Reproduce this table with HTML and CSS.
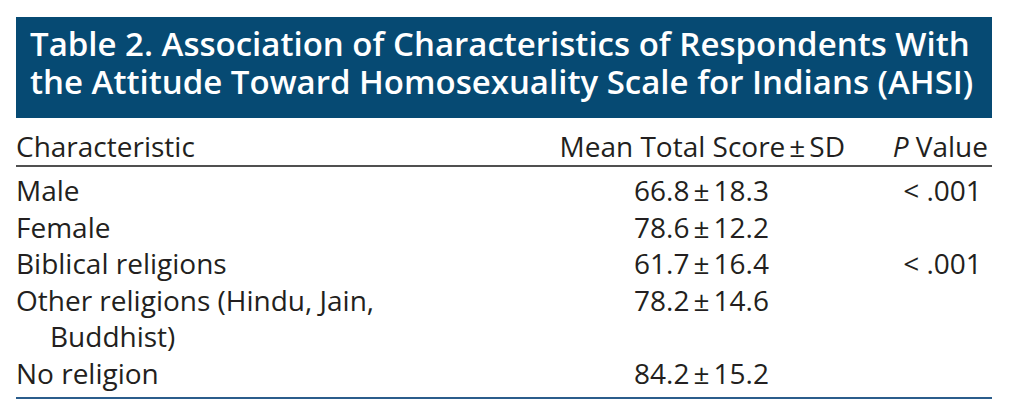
FILE: index.html
```html
<!DOCTYPE html>
<html lang="en">
<head>
<meta charset="utf-8">
<title>Table 2</title>
<link rel="stylesheet" href="styles.css">
</head>
<body>
<div class="wrap">
  <div class="title">
    <h1>Table 2. Association of Characteristics of Respondents With the Attitude Toward Homosexuality Scale for Indians (AHSI)</h1>
  </div>
  <div class="grid">
    <div class="hd c1">Characteristic</div>
    <div class="hd c2">Mean Total Score<span class="pm">±</span>SD</div>
    <div class="hd c3"><i>P</i> Value</div>

    <div class="c1 first"><span class="lbl">Male</span></div>
    <div class="c2 first">66.8<span class="pm">±</span>18.3</div>
    <div class="c3 first">&lt; .001</div>

    <div class="c1"><span class="lbl">Female</span></div>
    <div class="c2">78.6<span class="pm">±</span>12.2</div>
    <div class="c3"></div>

    <div class="c1"><span class="lbl">Biblical religions</span></div>
    <div class="c2">61.7<span class="pm">±</span>16.4</div>
    <div class="c3">&lt; .001</div>

    <div class="c1"><span class="lbl">Other religions (Hindu, Jain, Buddhist)</span></div>
    <div class="c2">78.2<span class="pm">±</span>14.6</div>
    <div class="c3"></div>

    <div class="c1 last"><span class="lbl">No religion</span></div>
    <div class="c2 last">84.2<span class="pm">±</span>15.2</div>
    <div class="c3 last"></div>
  </div>
</div>
</body>
</html>
```

FILE: styles.css
```css
html, body {
  margin: 0;
  padding: 0;
  background: #ffffff;
}
body {
  font-family: "Open Sans", "Liberation Sans", sans-serif;
  color: #231f20;
}
.wrap {
  width: 976px;
  margin-left: 16px;
  padding-top: 17px;
}
.title {
  background: #064a73;
  height: 101px;
  box-sizing: border-box;
  padding: 8px 0 0 14px;
}
.title h1 {
  margin: 0;
  color: #ffffff;
  font-weight: 600;
  font-size: 33px;
  line-height: 38px;
  letter-spacing: 0;
}
.grid {
  display: grid;
  grid-template-columns: 542px 287px 48px 99px;
  font-size: 28px;
  line-height: 36.6px;
  border-bottom: 2.5px solid #2b5d8c;
}
.grid > div {
  white-space: nowrap;
}
.hd {
  padding-top: 10px;
  border-bottom: 2.5px solid #505050;
}
.c1 { grid-column: 1; }
.c2 { grid-column: 2; text-align: center; }
.c3 { grid-column: 3 / span 2; padding-left: 48px; text-align: center; }
.hd.c3 { padding-left: 0; text-align: right; padding-right: 4px; }
.hd.c2 { text-align: right; }
.pm { margin: 0 4px; }
.first { padding-top: 5.5px; }
.last { padding-bottom: 5.5px; }
.lbl {
  display: inline-block;
  white-space: normal;
  width: 440px;
  padding-left: 34px;
  text-indent: -34px;
  box-sizing: border-box;
}
```
